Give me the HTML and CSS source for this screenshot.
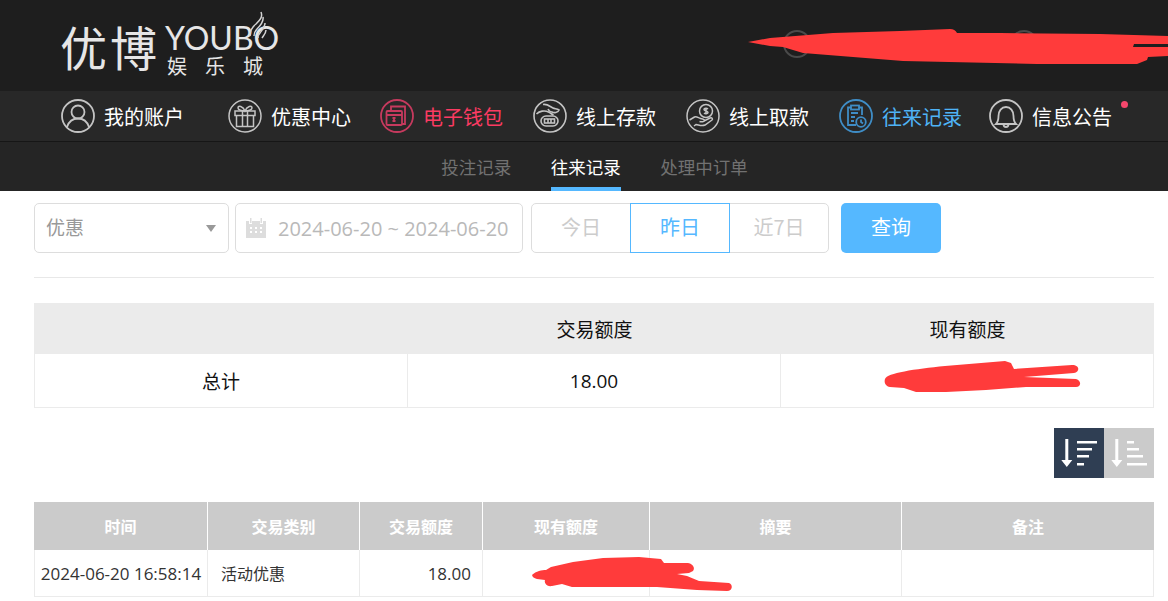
FILE: index.html
```html
<!DOCTYPE html>
<html lang="zh-CN">
	<head>
		<meta charset="UTF-8" />
		<title>往来记录</title>
		<link rel="stylesheet" href="styles.css">
	</head>
	<body>
		<div class="header">
			<div class="logo">
				<div class="logo-cn">优博</div>
				<div class="logo-right">
					<div class="logo-en">YOUBO</div>
					<div class="logo-sub">娱乐城</div>
				</div>
				<svg class="logo-flame" viewBox="0 0 24 40" fill="none" stroke="#d4d4d4" stroke-width="1.500">
					<path d="M16 1c2 5-1 8-5 12-4 3-6 7-6 12" />
					<path d="M18 6c1 5-3 9-6 12-2 2-3 4-3 7" />
					<path d="M20 12c0 4-3 7-5 10-1 1-2 3-2 5" />
					<path d="M21 19c0 3-2 5-4 8" />
				</svg>
			</div>
			<div class="header-links">
				<span class="round-link"></span>
				<span class="round-link"></span>
			</div>
		</div>

		<div class="nav">
			<a class="nav-item">
				<svg class="nav-icon" viewBox="0 0 34 34" fill="none" stroke="currentColor" stroke-width="1.800">
					<circle cx="17" cy="17" r="16" />
					<circle cx="17" cy="13" r="6.500" />
					<path d="M6 28c2-6 6-8.500 11-8.500s9 2.500 11 8.500" />
				</svg>
				<span>我的账户</span>
			</a>
			<a class="nav-item">
				<svg class="nav-icon" viewBox="0 0 34 34" fill="none" stroke="currentColor" stroke-width="1.500">
					<circle cx="17" cy="17" r="16" />
					<rect x="7" y="12" width="20" height="4.500" />
					<path d="M8.500 16.500v11h17v-11M14.500 12v15.500M19.500 12v15.500" />
					<path d="M17 12c-2-5-7-6-7-3 0 2 4 3 7 3 3 0 7-1 7-3 0-3-5-2-7 3z" />
				</svg>
				<span>优惠中心</span>
			</a>
			<a class="nav-item nav-red">
				<svg class="nav-icon" viewBox="0 0 34 34" fill="none" stroke="currentColor" stroke-width="1.800">
					<circle cx="17" cy="17" r="16" />
					<path d="M11 11V7.500h14V25h-3" />
					<rect x="6.500" y="12" width="15.500" height="14" rx="1" />
					<path d="M6.500 16h15.500M14 18v5M12.500 19h3M12.500 22h3" />
				</svg>
				<span>电子钱包</span>
			</a>
			<a class="nav-item">
				<svg class="nav-icon" viewBox="0 0 34 34" fill="none" stroke="currentColor" stroke-width="1.600">
					<circle cx="17" cy="17" r="16" />
					<path d="M10 5.500c4-1 7 2 10 3.500 2 1 4 .5 6 2-1 3-5 3-7 2-1 0-3-1-4-3" />
					<path d="M3.500 15c3-3 8-4 12-2 2 1 3 2 5 3" />
					<rect x="8" y="17" width="17" height="10" rx="5" />
					<rect x="11.500" y="20" width="10" height="4" />
					<path d="M15 20v4M18 20v4" />
				</svg>
				<span>线上存款</span>
			</a>
			<a class="nav-item">
				<svg class="nav-icon" viewBox="0 0 34 34" fill="none" stroke="currentColor" stroke-width="1.500">
					<circle cx="17" cy="17" r="16" />
					<circle cx="20" cy="12" r="6.500" />
					<path d="M20 8.500v7M22 10c-1-1-4-1-4 .500s4 1.500 4 3-3 1.500-4 .500" />
					<path d="M3.500 21l5-3c2-1 4 1 6 1.500 2 .5 4 .5 4 2s-3 1.500-5 1M18 22l6-3c2-1 3 1 2 2l-7 5c-3 1.500-6 0-9-.5l-2 1.500" />
				</svg>
				<span>线上取款</span>
			</a>
			<a class="nav-item nav-blue">
				<svg class="nav-icon" viewBox="0 0 34 34" fill="none" stroke="currentColor" stroke-width="1.800">
					<circle cx="17" cy="17" r="16" />
					<path d="M17 26H9V8.500h3M20 8.500h3V16" />
					<rect x="12" y="6.500" width="8" height="4" />
					<path d="M12 14h7M12 18h4M12 22h3" />
					<circle cx="22" cy="23" r="4.800" />
					<path d="M22 20.500V23l2 1.500" />
				</svg>
				<span>往来记录</span>
			</a>
			<a class="nav-item">
				<svg class="nav-icon" viewBox="0 0 34 34" fill="none" stroke="currentColor" stroke-width="1.800">
					<circle cx="17" cy="17" r="16" />
					<path d="M7 25c2-2 2.500-4 2.500-8 0-5 3-9 7.500-9s7.500 4 7.500 9c0 4 .5 6 2.500 8z" />
					<path d="M14.500 25c0 4 5 4 5 0" />
				</svg>
				<span>信息公告</span>
				<i class="nav-dot"></i>
			</a>
		</div>

		<div class="subnav">
			<a class="subnav-item">投注记录</a>
			<a class="subnav-item subnav-active">往来记录</a>
			<a class="subnav-item">处理中订单</a>
		</div>

		<div class="content">
			<div class="filters">
				<div class="field field-select">
					<span class="field-text">优惠</span>
					<i class="caret"></i>
				</div>
				<div class="field field-date">
					<svg class="calendar" viewBox="0 0 20 20" fill="#ddd">
						<path d="M0 3h3v3h3V3h8v3h3V3h3v17H0z" />
						<rect x="4" y="0" width="1.500" height="5" />
						<rect x="14.500" y="0" width="1.500" height="5" />
						<path fill="#fff" d="M4 9h2v2H4zM9 9h2v2H9zM14 9h2v2h-2zM4 13h2v2H4zM9 13h2v2H9zM14 13h2v2h-2z" />
					</svg>
					<span>2024-06-20 ~ 2024-06-20</span>
				</div>
				<div class="range">
					<a class="range-btn">今日</a>
					<a class="range-btn range-active">昨日</a>
					<a class="range-btn">近7日</a>
				</div>
				<a class="query-btn">查询</a>
			</div>

			<table class="summary">
				<tr class="summary-head">
					<th class="summary-first"></th>
					<th>交易额度</th>
					<th>现有额度</th>
				</tr>
				<tr>
					<td>总计</td>
					<td class="summary-num">18.00</td>
					<td></td>
				</tr>
			</table>

			<div class="sort">
				<a class="sort-btn sort-on">
					<svg viewBox="0 0 50 50" fill="#fff">
						<path d="M11.300 11h3v21h4l-5.500 7-5.500-7h4z" />
						<rect x="23" y="13" width="20" height="2.500" />
						<rect x="23" y="20" width="15" height="2.500" />
						<rect x="23" y="27" width="12" height="2.500" />
						<rect x="23" y="35" width="7" height="2.500" />
					</svg>
				</a>
				<a class="sort-btn">
					<svg viewBox="0 0 50 50" fill="#fff">
						<path d="M11.300 11h3v21h4l-5.500 7-5.500-7h4z" />
						<rect x="23" y="13" width="7" height="2.500" />
						<rect x="23" y="20" width="12" height="2.500" />
						<rect x="23" y="27" width="16" height="2.500" />
						<rect x="23" y="35" width="20" height="2.500" />
					</svg>
				</a>
			</div>

			<table class="detail">
				<colgroup>
					<col class="col-time" />
					<col class="col-type" />
					<col class="col-amount" />
					<col class="col-balance" />
					<col class="col-desc" />
					<col class="col-note" />
				</colgroup>
				<tr>
					<th>时间</th>
					<th>交易类别</th>
					<th>交易额度</th>
					<th>现有额度</th>
					<th>摘要</th>
					<th>备注</th>
				</tr>
				<tr>
					<td class="cell-time">2024-06-20 16:58:14</td>
					<td>活动优惠</td>
					<td class="cell-num">18.00</td>
					<td></td>
					<td></td>
					<td></td>
				</tr>
			</table>
		</div>

		<!-- red marker scribbles over the private numbers -->
		<svg class="scribbles" viewBox="0 0 1168 601" fill="#ff3b3b">
			<path d="M748 42L770 38 833 33 900 31 950 29Q955 29 957 33L1000 33 1100 34 1168 36V44H1134L1133 47H1168V56L1148 57 1147 60 1137 64 1037 64 903 61 803 53 783 47 770 46Z" />
			<path d="M885 379c2-6 30-10 60-13l60-5 6 2 3 6 58-4c8 0 8 7 2 8l-50 4 52 2c6 2 5 8 0 8h-50l-40 3-40 2-30 0-12-4-14-1c-5-1-6-5-5-8z" />
			<path d="M532 575c4-4 10-5 14-5l5-3 22-5 30-4 36-1 22 2 3 4 24 0c6 1 7 6 5 8l-4 2-12 1 10 2 12 5 30 2c4 1 4 8-2 8l-30-1-40-3-55 0-30 0-10-3-10 2c-6 1-8-4-7-6l-8-1c-4-1-5-3-5-5z" />
		</svg>
	</body>
</html>
```

FILE: styles.css
```css
* {
	box-sizing: border-box;
}

html,
body {
	height: 601px;
}

body {
	position: relative;
	margin: 0;
	overflow: hidden;
	background: #fff;
	font-family: "Noto Sans CJK SC", "Open Sans", sans-serif;
}

/* top bar */
.header {
	display: flex;
	justify-content: space-between;
	height: 91px;
	padding: 11px 130px 0 60px;
	background: #1e1e1e;
}

.logo {
	position: relative;
	display: flex;
	height: 70px;
	color: #e6e6e6;
}

.logo-cn {
	width: 105px;
	font-size: 47px;
	font-weight: 400;
	line-height: 70px;
	letter-spacing: 3px;
}

.logo-right {
	display: flex;
	flex-direction: column;
}

.logo-en {
	height: 44px;
	padding-top: 9px;
	font-family: "Lato", sans-serif;
	font-size: 32px;
	line-height: 36px;
}

.logo-sub {
	padding-left: 2px;
	font-size: 20px;
	font-weight: 400;
	line-height: 22px;
	letter-spacing: 18px;
}

.logo-flame {
	position: absolute;
	left: 185px;
	top: 0;
	width: 24px;
	height: 40px;
}

.header-links {
	display: flex;
	gap: 199px;
	padding-top: 19px;
}

.round-link {
	width: 28px;
	height: 28px;
	border: 2px solid #4a4a4a;
	border-radius: 50%;
}

/* main nav */
.nav {
	display: flex;
	height: 51px;
	padding-left: 61px;
	background: #282828;
	border-bottom: 1px solid #161616;
}

.nav-item {
	position: relative;
	display: flex;
	flex: none;
	align-items: center;
	gap: 9px;
	width: 153px;
	color: #fff;
	font-size: 20px;
}

.nav-item:first-child {
	width: 167px;
}

.nav-item:nth-child(2) {
	width: 152px;
}

.nav-item:nth-child(6) {
	width: 150px;
}

.nav-icon {
	flex: none;
	width: 34px;
	height: 34px;
	color: #c4c4c4;
}

.nav-red {
	color: #fb3b62;
}

.nav-red .nav-icon {
	color: #c63a5e;
}

.nav-blue {
	color: #4fb3f6;
}

.nav-blue .nav-icon {
	color: #3f8dc6;
}

.nav-dot {
	position: absolute;
	left: 132px;
	top: 10px;
	width: 7px;
	height: 7px;
	background: #f5476c;
	border-radius: 50%;
}

/* sub nav */
.subnav {
	display: flex;
	justify-content: center;
	gap: 39.500px;
	height: 49px;
	padding-left: 21px;
	background: #252525;
}

.subnav-item {
	color: #717171;
	font-size: 17.500px;
	line-height: 49px;
}

.subnav-active {
	color: #fff;
	border-bottom: 4px solid #55b8ff;
}

/* filters */
.content {
	padding: 12px 14px 0 34px;
}

.filters {
	display: flex;
	align-items: stretch;
	height: 50px;
}

.field {
	display: flex;
	align-items: center;
	border: 1px solid #ddd;
	border-radius: 5px;
	font-size: 19px;
}

.field-select {
	justify-content: space-between;
	width: 195px;
	margin-right: 6px;
	padding: 0 12px 0 11px;
	color: #999;
}

.field-text {
	margin-bottom: 3px;
}

.caret {
	width: 0;
	height: 0;
	border-top: 7px solid #999;
	border-left: 5px solid transparent;
	border-right: 5px solid transparent;
}

.field-date {
	gap: 12px;
	width: 288px;
	margin-right: 8px;
	padding-left: 10px;
	color: #b9b9b9;
}

.calendar {
	width: 20px;
	height: 20px;
}

.field-date span {
	font-family: "Open Sans", sans-serif;
	font-size: 20px;
	white-space: nowrap;
}

.range {
	display: flex;
	width: 298px;
	margin-right: 12px;
	border: 1px solid #ddd;
	border-radius: 5px;
}

.range-btn {
	flex: 1;
	color: #ccc;
	font-size: 20px;
	line-height: 46px;
	text-align: center;
}

.range-active {
	margin: -1px 0;
	color: #55b8ff;
	border: 1px solid #55b8ff;
}

.query-btn {
	width: 100px;
	background: #55b8ff;
	border-radius: 5px;
	color: #fff;
	font-size: 20px;
	line-height: 48px;
	text-align: center;
}

/* totals */
.summary {
	width: 1120px;
	margin-top: 24px;
	padding-top: 25px;
	border-top: 1px solid #e8e8e8;
	border-collapse: separate;
	border-spacing: 0;
	table-layout: fixed;
}

.summary-first {
	width: 374px;
}

.summary th {
	height: 51px;
	padding-bottom: 2px;
	background: #ebebeb;
	color: #111;
	font-size: 19px;
	font-weight: 400;
}

.summary td {
	height: 54px;
	border-right: 1px solid #ebebeb;
	border-bottom: 1px solid #ebebeb;
	color: #111;
	font-size: 19px;
	text-align: center;
}

.summary td:first-child {
	border-left: 1px solid #ebebeb;
}

.summary-num {
	font-family: "Open Sans", sans-serif;
	font-weight: 500;
}

/* sort buttons */
.sort {
	display: flex;
	justify-content: flex-end;
	margin-top: 20px;
}

.sort-btn {
	width: 50px;
	height: 50px;
	background: #cbcbcb;
}

.sort-btn svg {
	display: block;
}

.sort-on {
	background: #2f3e53;
}

/* records */
.detail {
	width: 1120px;
	margin-top: 24px;
	border-collapse: separate;
	border-spacing: 0;
	table-layout: fixed;
}

.col-time {
	width: 174px;
}

.col-type {
	width: 152px;
}

.col-amount {
	width: 123px;
}

.col-balance {
	width: 167px;
}

.col-desc {
	width: 252px;
}

.detail th {
	height: 48px;
	background: #cbcbcb;
	border-right: 1px solid #fff;
	color: #fff;
	font-size: 16px;
	font-weight: 700;
}

.detail th:last-child {
	border-right: 0;
}

.detail td {
	height: 47px;
	padding: 0 13px;
	border-right: 1px solid #ebebeb;
	border-bottom: 1px solid #ebebeb;
	color: #333;
	font-size: 16px;
}

.detail td:first-child {
	border-left: 1px solid #ebebeb;
}

.detail .cell-time {
	padding: 0;
	font-family: "Open Sans", sans-serif;
	font-size: 17px;
	text-align: center;
	white-space: nowrap;
}

.detail .cell-num {
	padding-right: 11px;
	font-family: "Open Sans", sans-serif;
	font-size: 17px;
	text-align: right;
}

.scribbles {
	position: absolute;
	left: 0;
	top: 0;
	width: 1168px;
	height: 601px;
	pointer-events: none;
}
```
